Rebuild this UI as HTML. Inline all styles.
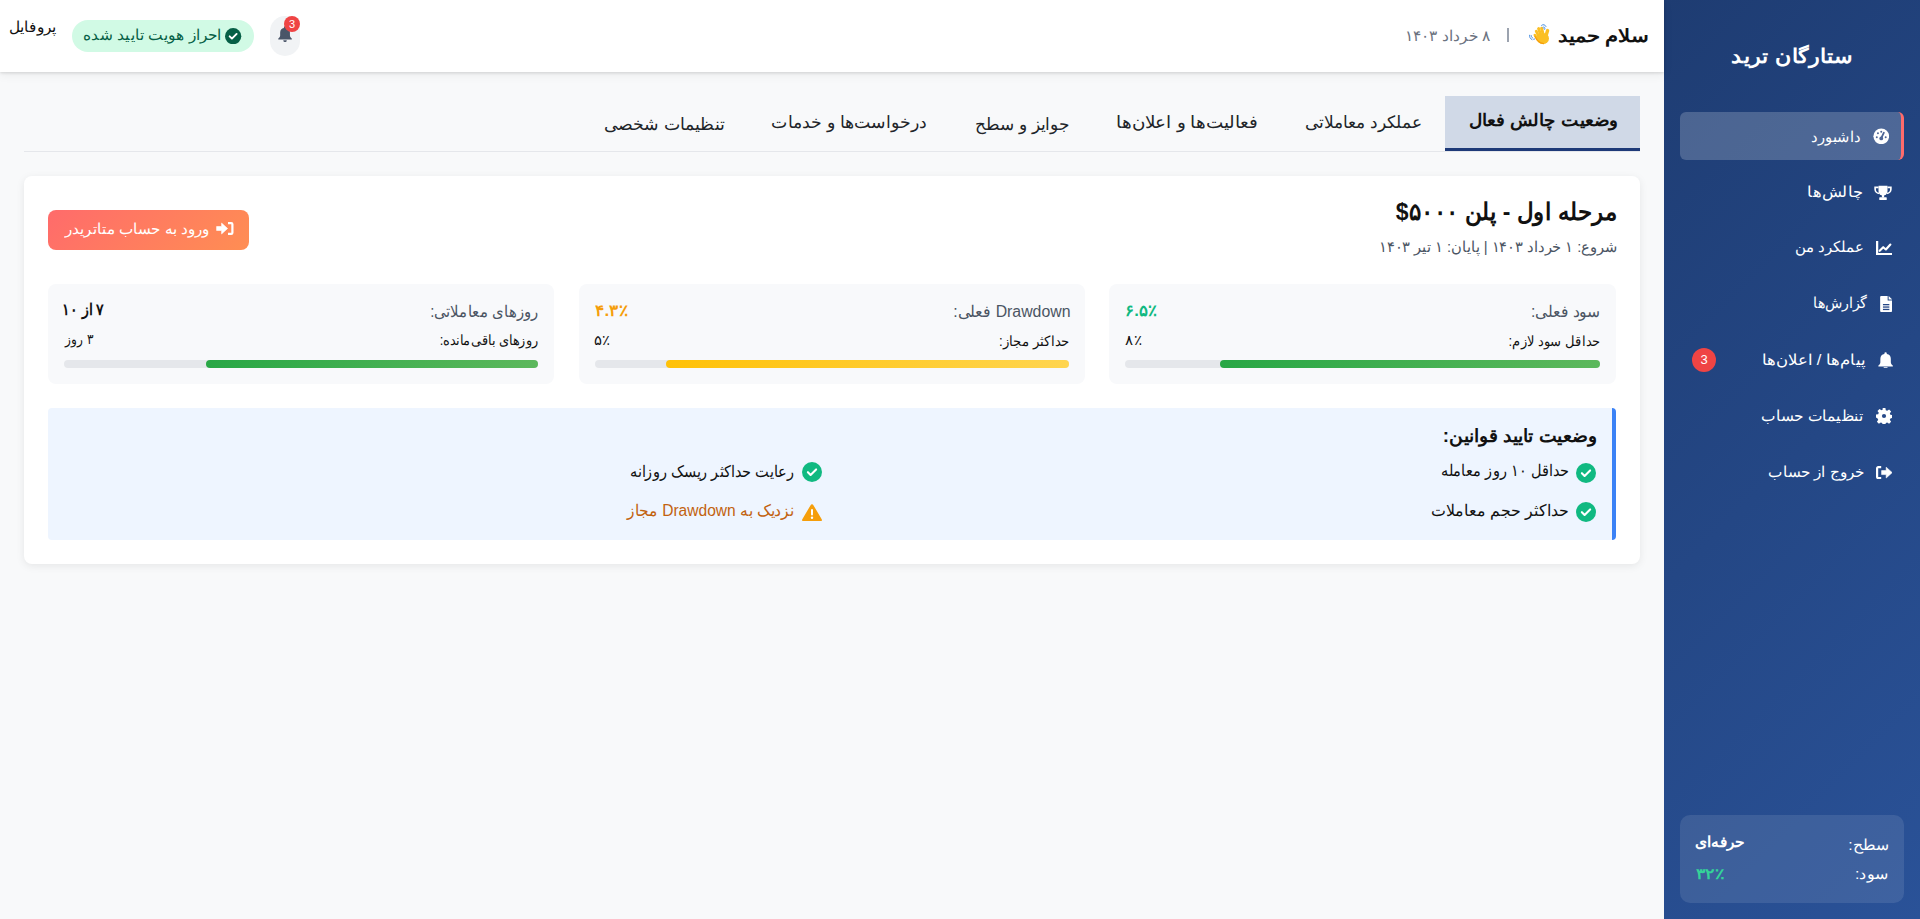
<!DOCTYPE html>
<html lang="fa" dir="rtl">
<head>
<meta charset="utf-8">
<title>ستارگان ترید</title>
<style>
*{box-sizing:border-box;margin:0;padding:0}
html,body{width:1920px;height:919px;overflow:hidden}
body{font-family:"Liberation Sans",sans-serif;background:#f8f9fa;position:relative}
.a{position:absolute}
.bdg{background:#ef4444;color:#fff;text-align:center;font-family:"Liberation Sans",sans-serif}
.f{position:absolute;white-space:nowrap;line-height:24px;direction:rtl}
</style>
</head>
<body>
<div class="a" style="left:1664px;top:0px;width:256px;height:919px;background:linear-gradient(135deg,#1e3c72 0%,#2a5298 100%)"></div>
<div class="a" style="left:1680px;top:112px;width:224px;height:48px;background:rgba(255,255,255,.2);border-radius:6px;border-right:3px solid #ff6b6b"></div>
<svg class="a" style="left:1872.8px;top:127.6px;width:16.5px;height:16.7px" viewBox="0 0 20 20"><circle cx="10" cy="10" r="9.5" fill="#fff"/><path d="M10 12.2 L13.2 5.6" stroke="#4d6596" stroke-width="2.2" stroke-linecap="round"/><circle cx="10" cy="12.5" r="2.3" fill="#4d6596"/><circle cx="4.6" cy="11" r="1.2" fill="#4d6596"/><circle cx="6" cy="6.2" r="1.2" fill="#4d6596"/><circle cx="10" cy="4.3" r="1.2" fill="#4d6596"/><circle cx="15.4" cy="11" r="1.2" fill="#4d6596"/></svg>
<svg class="a" style="left:1874px;top:184.8px;width:18px;height:15.2px" viewBox="0 0 24 20"><path d="M6 1h12v7a6 6 0 0 1-12 0z" fill="#fff"/><path d="M6 3H1.5v2.5c0 3.2 2.8 5.6 5.6 5.6M18 3h4.5v2.5c0 3.2-2.8 5.6-5.6 5.6" fill="none" stroke="#fff" stroke-width="2.2"/><rect x="10.5" y="13" width="3" height="3.5" fill="#fff"/><rect x="7" y="16.3" width="10" height="3.7" rx="0.8" fill="#fff"/></svg>
<svg class="a" style="left:1875.7px;top:241px;width:16.3px;height:14.3px" viewBox="0 0 16 14"><path d="M1.1 0v12.9h14.9" fill="none" stroke="#fff" stroke-width="2.2"/><path d="M3.6 9.6l3.5-3.5 2.6 2.2 4.4-4.8" fill="none" stroke="#fff" stroke-width="2.1" stroke-linejoin="round" stroke-linecap="round"/></svg>
<svg class="a" style="left:1879.7px;top:295.9px;width:12.3px;height:16px" viewBox="0 0 12 16"><path d="M0 1a1 1 0 0 1 1-1h6.5v4.5H12V15a1 1 0 0 1-1 1H1a1 1 0 0 1-1-1z" fill="#fff"/><path d="M8.5 0L12 3.5H8.5z" fill="#fff"/><rect x="2.8" y="8" width="6.4" height="1.3" fill="#264786"/><rect x="2.8" y="10.4" width="6.4" height="1.3" fill="#264786"/><rect x="2.8" y="12.8" width="6.4" height="1.3" fill="#264786"/></svg>
<svg class="a" style="left:1877.6px;top:351.8px;width:15.2px;height:16.6px" viewBox="0 0 15 16.5"><path d="M7.5 0.2a1.2 1.2 0 0 1 1.2 1.2v.7a4.8 4.8 0 0 1 4 4.7v3.3c0 1.4 1.1 2.6 2 3.3v1.1H0.3v-1.1c.9-.7 2-1.9 2-3.3V6.8a4.8 4.8 0 0 1 4-4.7v-.7A1.2 1.2 0 0 1 7.5 0.2z" fill="#fff"/><path d="M5.6 15.2h3.8a1.9 1.9 0 0 1-3.8 0z" fill="#fff"/></svg>
<svg class="a" style="left:1876px;top:408.2px;width:16px;height:16px" viewBox="0 0 16 16"><path d="M6.6 0h2.8l.4 2.2 1.4.6 1.9-1.3 2 2-1.3 1.9.6 1.4 2.2.4v2.8l-2.2.4-.6 1.4 1.3 1.9-2 2-1.9-1.3-1.4.6-.4 2.2H6.6l-.4-2.2-1.4-.6-1.9 1.3-2-2 1.3-1.9-.6-1.4L0 9.4V6.6l2.2-.4.6-1.4-1.3-1.9 2-2 1.9 1.3 1.4-.6z" fill="#fff"/><circle cx="8" cy="8" r="2.1" fill="#274a8a"/></svg>
<svg class="a" style="left:1876px;top:465.8px;width:16.4px;height:13.2px" viewBox="0 0 16.4 13.2"><path d="M5.2 1.1H2.2a1.1 1.1 0 0 0-1.1 1.1v8.8a1.1 1.1 0 0 0 1.1 1.1h3" fill="none" stroke="#fff" stroke-width="2.2"/><path d="M5.6 4.6h4.6V1.2l6 5.4-6 5.4V8.6H5.6z" fill="#fff" stroke="#fff" stroke-width="0.6" stroke-linejoin="round"/></svg>
<div class="a bdg" style="left:1692px;top:348px;width:24px;height:24px;border-radius:12px;font-size:13px;line-height:24px">3</div>
<div class="a" style="left:1680px;top:815px;width:224px;height:88px;background:rgba(255,255,255,.1);border-radius:10px"></div>
<div class="a" style="left:0px;top:0px;width:1664px;height:72px;background:#fff;box-shadow:0 1px 3px rgba(0,0,0,.13),0 3px 10px rgba(0,0,0,.06)"></div>
<svg class="a" style="left:1522px;top:18px;width:34px;height:32px" viewBox="0 0 34 32"><g stroke="#fbbf24" stroke-linecap="round" fill="none"><path d="M21.5 18 L19.6 10.2" stroke-width="3"/><path d="M19.2 18.5 L16.6 10.6" stroke-width="3"/><path d="M17.2 19.5 L14.2 13.2" stroke-width="2.8"/><path d="M15.8 21 L12.8 17" stroke-width="2.6"/><path d="M23.5 19.5 L25.6 12.6" stroke-width="3.4"/></g><ellipse cx="21" cy="20.5" rx="6" ry="5.6" fill="#fbbf24"/><path d="M13 18.5c1.5 3.5 4.5 6.5 8.5 7.2" stroke="#f59e0b" stroke-width="1.3" fill="none" stroke-linecap="round"/><path d="M19.6 7.3c1.6-1.3 3.6-.6 4.4 1.2M21 9.2c.9-.4 1.7 0 2.1.9M22.6 11.4l-.6-1" stroke="#4a90e2" stroke-width="1" fill="none" stroke-linecap="round"/><path d="M7.6 17.2c-.4 1.8.6 3.6 2.4 4.4M9.2 17.6c-.1 1 .4 1.9 1.3 2.3M11.6 21.2l1-.2" stroke="#4a90e2" stroke-width="1" fill="none" stroke-linecap="round"/></svg>
<div class="a" style="left:1507px;top:28px;width:2px;height:14px;background:#9ca3af"></div>
<div class="a" style="left:72px;top:20px;width:182px;height:32px;background:#d1fae5;border-radius:16px"></div>
<svg class="a" style="left:225.4px;top:28px;width:16.3px;height:16.3px" viewBox="0 0 16 16"><circle cx="8" cy="8" r="8" fill="#065f46"/><path d="M4.6 8.2l2.2 2.2 4.6-4.6" stroke="#fff" stroke-width="1.9" fill="none" stroke-linecap="round" stroke-linejoin="round"/></svg>
<div class="a" style="left:270px;top:16px;width:30px;height:40px;background:#f1f3f5;border-radius:15px"></div>
<svg class="a" style="left:277.7px;top:26.3px;width:14.1px;height:15.5px" viewBox="0 0 15 16.5"><path d="M7.5 0.2a1.2 1.2 0 0 1 1.2 1.2v.7a4.8 4.8 0 0 1 4 4.7v3.3c0 1.4 1.1 2.6 2 3.3v1.1H0.3v-1.1c.9-.7 2-1.9 2-3.3V6.8a4.8 4.8 0 0 1 4-4.7v-.7A1.2 1.2 0 0 1 7.5 0.2z" fill="#4a5568"/><path d="M5.6 15.2h3.8a1.9 1.9 0 0 1-3.8 0z" fill="#4a5568"/></svg>
<div class="a bdg" style="left:284px;top:16px;width:16px;height:16px;border-radius:8px;font-size:11px;line-height:16px">3</div>
<div class="a" style="left:24px;top:151px;width:1616px;height:1px;background:#e5e7eb"></div>
<div class="a" style="left:1445px;top:96px;width:195px;height:55px;background:#d0d9e7;border-bottom:3px solid #1e3a78"></div>
<div class="a" style="left:24px;top:176px;width:1616px;height:388px;background:#fff;border-radius:8px;box-shadow:0 2px 8px rgba(0,0,0,.08)"></div>
<div class="a" style="left:48px;top:210px;width:201px;height:40px;background:linear-gradient(135deg,#ff6b6b,#ff8e53);border-radius:8px"></div>
<svg class="a" style="left:216px;top:222px;width:17.5px;height:13px" viewBox="0 0 17.5 13"><path d="M12 1.1h3.3a1.1 1.1 0 0 1 1.1 1.1v8.6a1.1 1.1 0 0 1-1.1 1.1H12" fill="none" stroke="#fff" stroke-width="2.2"/><path d="M0.6 4.5h5V1.1l6 5.4-6 5.4V8.5h-5z" fill="#fff" stroke="#fff" stroke-width="0.6" stroke-linejoin="round"/></svg>
<div class="a" style="left:1109px;top:284px;width:507px;height:100px;background:#f8f9fb;border-radius:8px"></div>
<div class="a" style="left:1125px;top:360px;width:475px;height:8px;background:#e5e7eb;border-radius:4px"></div>
<div class="a" style="left:1220px;top:360px;width:380px;height:8px;background:linear-gradient(90deg,#28a745,#5cb85c);border-radius:4px"></div>
<div class="a" style="left:579px;top:284px;width:506px;height:100px;background:#f8f9fb;border-radius:8px"></div>
<div class="a" style="left:595px;top:360px;width:474px;height:8px;background:#e5e7eb;border-radius:4px"></div>
<div class="a" style="left:666px;top:360px;width:403px;height:8px;background:linear-gradient(90deg,#ffc107,#ffd54f);border-radius:4px"></div>
<div class="a" style="left:48px;top:284px;width:506px;height:100px;background:#f8f9fb;border-radius:8px"></div>
<div class="a" style="left:64px;top:360px;width:474px;height:8px;background:#e5e7eb;border-radius:4px"></div>
<div class="a" style="left:205.7px;top:360px;width:332.3px;height:8px;background:linear-gradient(90deg,#28a745,#5cb85c);border-radius:4px"></div>
<div class="a" style="left:48px;top:408px;width:1568px;height:132px;background:#eef5ff;border-right:4px solid #3b82f6;border-radius:4px"></div>
<svg class="a" style="left:1576px;top:462.6px;width:20px;height:20px" viewBox="0 0 20 20"><circle cx="10" cy="10" r="10" fill="#10b981"/><path d="M5.9 10.2l2.7 2.7 5.5-5.5" stroke="#fff" stroke-width="2.1" fill="none" stroke-linecap="round" stroke-linejoin="round"/></svg>
<svg class="a" style="left:1576px;top:502.4px;width:20px;height:20px" viewBox="0 0 20 20"><circle cx="10" cy="10" r="10" fill="#10b981"/><path d="M5.9 10.2l2.7 2.7 5.5-5.5" stroke="#fff" stroke-width="2.1" fill="none" stroke-linecap="round" stroke-linejoin="round"/></svg>
<svg class="a" style="left:802px;top:462.4px;width:20px;height:20px" viewBox="0 0 20 20"><circle cx="10" cy="10" r="10" fill="#10b981"/><path d="M5.9 10.2l2.7 2.7 5.5-5.5" stroke="#fff" stroke-width="2.1" fill="none" stroke-linecap="round" stroke-linejoin="round"/></svg>
<svg class="a" style="left:802px;top:504px;width:20px;height:17px" viewBox="0 0 20 17"><path d="M8.6 1.2a1.6 1.6 0 0 1 2.8 0l8.3 14a1.6 1.6 0 0 1-1.4 2.4H1.7A1.6 1.6 0 0 1 .3 15.2z" fill="#f59e0b"/><rect x="9" y="5" width="2" height="6.4" rx="1" fill="#fff"/><circle cx="10" cy="13.8" r="1.2" fill="#fff"/></svg>
<div class="f" id="logo" style="top:44.30px;font-size:20px;color:#fff;font-weight:bold;right:67.15px;transform-origin:100% 50%;--w:121.18;transform:scaleX(0.925);">ستارگان ترید</div>
<div class="f" id="sb1" style="top:125.00px;font-size:15px;color:#fff;right:59.02px;transform-origin:100% 50%;--w:49.96;transform:scaleX(0.9796);">داشبورد</div>
<div class="f" id="sb2" style="top:179.50px;font-size:15px;color:#fff;right:57.07px;transform-origin:100% 50%;--w:55.58;transform:scaleX(1.0898);">چالش‌ها</div>
<div class="f" id="sb3" style="top:235.40px;font-size:15px;color:#fff;right:56.00px;transform-origin:100% 50%;--w:68.79;transform:scaleX(0.997);">عملکرد من</div>
<div class="f" id="sb4" style="top:290.50px;font-size:15px;color:#fff;right:52.97px;transform-origin:100% 50%;--w:54.05;transform:scaleX(0.9482);">گزارش‌ها</div>
<div class="f" id="sb5" style="top:347.60px;font-size:15px;color:#fff;right:54.00px;transform-origin:100% 50%;--w:103.91;transform:scaleX(1.1054);">پیام‌ها / اعلان‌ها</div>
<div class="f" id="sb6" style="top:403.50px;font-size:15px;color:#fff;right:56.61px;transform-origin:100% 50%;--w:101.73;transform:scaleX(1.0276);">تنظیمات حساب</div>
<div class="f" id="sb7" style="top:459.50px;font-size:15px;color:#fff;right:55.58px;transform-origin:100% 50%;--w:96.04;transform:scaleX(1.0217);">خروج از حساب</div>
<div class="f" id="lv1" style="top:832.80px;font-size:15px;color:#fff;right:30.51px;transform-origin:100% 50%;--w:40.95;transform:scaleX(1.05);">سطح:</div>
<div class="f" id="lv2" style="top:829.50px;font-size:15px;color:#fff;font-weight:bold;left:1695.15px;transform-origin:0 50%;--w:49.20;transform:scaleX(0.8483);">حرفه‌ای</div>
<div class="f" id="lv3" style="top:861.60px;font-size:15px;color:#fff;right:30.48px;transform-origin:100% 50%;--w:34.21;transform:scaleX(1.0691);">سود:</div>
<div class="f" id="lv4" style="top:861.50px;font-size:15px;color:#34d399;font-weight:bold;left:1696.00px;transform-origin:0 50%;--w:28.25;transform:scaleX(1.0463);">۳۲٪</div>
<div class="f" id="hello" style="top:24.30px;font-size:18px;color:#111;font-weight:bold;right:271.02px;transform-origin:100% 50%;--w:90.76;transform:scaleX(0.9865);">سلام حمید</div>
<div class="f" id="date" style="top:23.90px;font-size:15px;color:#6b7280;right:430.00px;transform-origin:100% 50%;--w:85.56;transform:scaleX(1.0308);">۸ خرداد ۱۴۰۳</div>
<div class="f" id="verif" style="top:23.00px;font-size:15px;color:#065f46;right:1698.37px;transform-origin:100% 50%;--w:138.47;transform:scaleX(1.0334);">احراز هویت تایید شده</div>
<div class="f" id="prof" style="top:15.30px;font-size:15px;color:#111;left:8.98px;transform-origin:0 50%;--w:47.02;transform:scaleX(1.0222);">پروفایل</div>
<div class="f" id="tab1" style="top:109.00px;font-size:17px;color:#111;font-weight:bold;right:302.93px;transform-origin:100% 50%;--w:148.55;transform:scaleX(0.917);">وضعیت چالش فعال</div>
<div class="f" id="tab2" style="top:111.20px;font-size:17px;color:#212529;right:498.60px;transform-origin:100% 50%;--w:117.00;transform:scaleX(1);">عملکرد معاملاتی</div>
<div class="f" id="tab3" style="top:111.20px;font-size:17px;color:#212529;right:662.55px;transform-origin:100% 50%;--w:140.95;transform:scaleX(1.076);">فعالیت‌ها و اعلان‌ها</div>
<div class="f" id="tab4" style="top:112.50px;font-size:17px;color:#212529;right:849.62px;transform-origin:100% 50%;--w:95.28;transform:scaleX(0.9925);">جوایز و سطح</div>
<div class="f" id="tab5" style="top:111.40px;font-size:17px;color:#212529;right:992.19px;transform-origin:100% 50%;--w:156.13;transform:scaleX(1.0138);">درخواست‌ها و خدمات</div>
<div class="f" id="tab6" style="top:112.80px;font-size:17px;color:#212529;right:1194.98px;transform-origin:100% 50%;--w:121.03;transform:scaleX(1.0171);">تنظیمات شخصی</div>
<div class="f" id="ttl" style="top:200.10px;font-size:24px;color:#111;font-weight:bold;right:302.79px;transform-origin:100% 50%;--w:221.19;transform:scaleX(0.8315);">مرحله اول - پلن ۵۰۰۰$</div>
<div class="f" id="sub" style="top:234.70px;font-size:15px;color:#4b5563;right:302.43px;transform-origin:100% 50%;--w:238.64;transform:scaleX(0.9861);">شروع: ۱ خرداد ۱۴۰۳ | پایان: ۱ تیر ۱۴۰۳</div>
<div class="f" id="btn" style="top:217.40px;font-size:15px;color:#fff;right:1710.98px;transform-origin:100% 50%;--w:144.30;transform:scaleX(1.0162);">ورود به حساب متاتریدر</div>
<div class="f" id="s1l1" style="top:299.50px;font-size:16px;color:#4b5563;right:319.81px;transform-origin:100% 50%;--w:68.97;transform:scaleX(0.9853);">سود فعلی:</div>
<div class="f" id="s1v1" style="top:298.80px;font-size:16px;color:#10b981;font-weight:bold;left:1124.63px;transform-origin:0 50%;--w:32.62;transform:scaleX(0.9594);">۶.۵٪</div>
<div class="f" id="s1l2" style="top:329.00px;font-size:14px;color:#111;right:319.49px;transform-origin:100% 50%;--w:92.16;transform:scaleX(0.9309);">حداقل سود لازم:</div>
<div class="f" id="s1v2" style="top:327.90px;font-size:14px;color:#111;left:1124.54px;transform-origin:0 50%;--w:17.26;transform:scaleX(1.0788);">۸٪</div>
<div class="f" id="s2l1" style="top:299.70px;font-size:16px;color:#4b5563;right:850.01px;transform-origin:100% 50%;--w:117.27;transform:scaleX(0.9855);">Drawdown فعلی:</div>
<div class="f" id="s2v1" style="top:298.90px;font-size:16px;color:#f59e0b;font-weight:bold;left:595.00px;transform-origin:0 50%;--w:33.48;transform:scaleX(0.9847);">۴.۳٪</div>
<div class="f" id="s2l2" style="top:329.30px;font-size:14px;color:#111;right:850.05px;transform-origin:100% 50%;--w:70.89;transform:scaleX(0.9452);">حداکثر مجاز:</div>
<div class="f" id="s2v2" style="top:327.90px;font-size:14px;color:#111;left:593.94px;transform-origin:0 50%;--w:16.91;transform:scaleX(1.0569);">۵٪</div>
<div class="f" id="s3l1" style="top:299.90px;font-size:16px;color:#4b5563;right:1380.84px;transform-origin:100% 50%;--w:108.67;transform:scaleX(0.9368);">روزهای معاملاتی:</div>
<div class="f" id="s3v1" style="top:298.40px;font-size:16px;color:#111;font-weight:bold;left:61.82px;transform-origin:0 50%;--w:42.45;transform:scaleX(0.8163);">۷ از ۱۰</div>
<div class="f" id="s3l2" style="top:327.80px;font-size:14px;color:#111;right:1380.85px;transform-origin:100% 50%;--w:99.14;transform:scaleX(0.918);">روزهای باقی‌مانده:</div>
<div class="f" id="s3v2" style="top:326.50px;font-size:14px;color:#111;left:65.43px;transform-origin:0 50%;--w:28.60;transform:scaleX(0.8667);">۳ روز</div>
<div class="f" id="rh" style="top:424.00px;font-size:18px;color:#111;font-weight:bold;right:323.50px;transform-origin:100% 50%;--w:154.21;transform:scaleX(0.8712);">وضعیت تایید قوانین:</div>
<div class="f" id="r1" style="top:459.20px;font-size:16px;color:#111;right:350.90px;transform-origin:100% 50%;--w:128.73;transform:scaleX(0.913);">حداقل ۱۰ روز معامله</div>
<div class="f" id="r2" style="top:499.40px;font-size:16px;color:#111;right:350.81px;transform-origin:100% 50%;--w:138.19;transform:scaleX(0.9942);">حداکثر حجم معاملات</div>
<div class="f" id="r3" style="top:460.30px;font-size:16px;color:#111;right:1125.71px;transform-origin:100% 50%;--w:164.28;transform:scaleX(0.9127);">رعایت حداکثر ریسک روزانه</div>
<div class="f" id="r4" style="top:498.80px;font-size:16px;color:#c2620f;right:1125.82px;transform-origin:100% 50%;--w:167.20;transform:scaleX(0.9721);">نزدیک به Drawdown مجاز</div>
<script>
(function(){try{var els=document.querySelectorAll('.f');for(var i=0;i<els.length;i++){var e=els[i];var w=parseFloat(getComputedStyle(e).getPropertyValue('--w'));if(!w)continue;e.style.transform='none';var r=e.getBoundingClientRect().width;if(r>0)e.style.transform='scaleX('+(w/r).toFixed(4)+')';}}catch(err){}})();
</script>
</body>
</html>
